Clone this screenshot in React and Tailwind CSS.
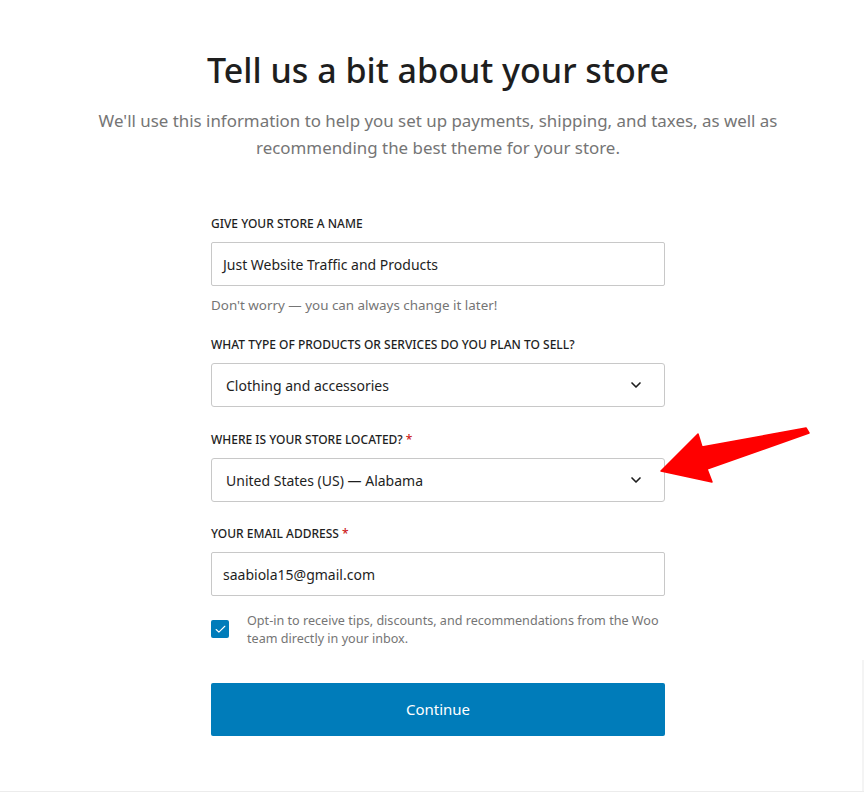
import { ChevronDown, Check } from 'lucide-react'

function Label({ children, required }) {
  return (
    <label className="block text-[12px] leading-[16px] font-medium uppercase text-[#1e1e1e] mb-[10px]">
      {children}
      {required && <span className="text-[#cc1818] ml-[3px]">*</span>}
    </label>
  )
}

function TextField({ value }) {
  return (
    <div className="h-[44px] w-full border border-[#c8c8c8] rounded-[2px] flex items-center px-[11px] text-[14px] text-[#1e1e1e]">
      {value}
    </div>
  )
}

function SelectField({ value }) {
  return (
    <div className="h-[44px] w-full border border-[#c8c8c8] rounded-[3px] flex items-center justify-between pl-[14px] pr-[20px] text-[14px] text-[#1e1e1e]">
      <span>{value}</span>
      <ChevronDown size={16} strokeWidth={2.5} className="text-[#1e1e1e]" />
    </div>
  )
}

export default function App() {
  return (
    <div
      className="relative w-[864px] h-[792px] bg-white overflow-hidden border-b border-[#ececec]"
      style={{ fontFamily: '"Noto Sans", "Open Sans", sans-serif' }}
    >
      <div className="flex flex-col items-center pl-[12px] pt-[46px]">
        <h1 className="text-[34px] leading-[48px] font-medium text-[#1e1e1e]">
          Tell us a bit about your store
        </h1>
        <p className="mt-[13px] w-[700px] text-center text-[16.9px] leading-[27px] text-[#757575]">
          We'll use this information to help you set up payments, shipping, and taxes, as well as
          recommending the best theme for your store.
        </p>

        <form className="mt-[55px] w-[454px]">
          <Label>Give your store a name</Label>
          <TextField value="Just Website Traffic and Products" />
          <p className="mt-[10px] text-[13.4px] leading-[18px] text-[#757575]">
            Don't worry — you can always change it later!
          </p>

          <div className="mt-[23px]">
            <Label>What type of products or services do you plan to sell?</Label>
            <SelectField value="Clothing and accessories" />
          </div>

          <div className="mt-[25px]">
            <Label required>Where is your store located?</Label>
            <SelectField value="United States (US) — Alabama" />
          </div>

          <div className="mt-[24px]">
            <Label required>Your email address</Label>
            <TextField value="saabiola15@gmail.com" />
          </div>

          <div className="mt-[16px] flex items-start gap-[18px]">
            <div className="mt-[8px] w-[18px] h-[18px] shrink-0 rounded-[2px] bg-[#007cba] flex items-center justify-center">
              <Check size={13} strokeWidth={2} className="text-white" />
            </div>
            <p className="text-[12.6px] leading-[18px] text-[#757575]">
              Opt-in to receive tips, discounts, and recommendations from the Woo team directly in
              your inbox.
            </p>
          </div>

          <button
            type="button"
            className="mt-[35px] w-full h-[53px] rounded-[2px] bg-[#007cba] text-white text-[15px]"
          >
            Continue
          </button>
        </form>
      </div>

      <div className="absolute right-0 top-[660px] w-[2px] h-[132px] bg-[#f4f4f4]" />

      <svg className="absolute inset-0 pointer-events-none" width="864" height="792">
        <polygon
          points="661,471 698,434 702,447 806,428 809,433 707,469 712,482"
          fill="#ff0000"
          stroke="#ff0000"
          strokeWidth="1.5"
          strokeLinejoin="round"
        />
      </svg>
    </div>
  )
}
